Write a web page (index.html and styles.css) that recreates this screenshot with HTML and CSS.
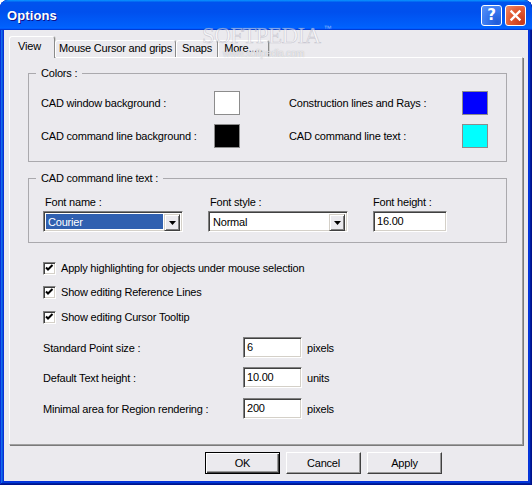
FILE: index.html
```html
<!DOCTYPE html>
<html>
<head>
<meta charset="utf-8">
<title>Options</title>
<link rel="stylesheet" href="styles.css">
</head>
<body>
<div class="window">
  <div class="titlebar">
    <span class="title">Options</span>
    <div class="caption-buttons">
      <div class="cap-btn help">?</div>
      <div class="cap-btn close">
        <svg width="13" height="13" viewBox="0 0 13 13"><path d="M2.5 2.5 L10.5 10.5 M10.5 2.5 L2.5 10.5" stroke="#fff" stroke-width="2.4" stroke-linecap="square"/></svg>
      </div>
    </div>
  </div>
  <div class="client">
    <div class="tabs">
      <div class="tab active tab-view">View</div>
      <div class="tab tab-mouse">Mouse Cursor and grips</div>
      <div class="tab tab-snaps">Snaps</div>
      <div class="tab tab-more">More.....</div>
    </div>
    <div class="panel">
      <fieldset class="group colors">
        <legend>Colors :</legend>
        <div class="color-grid">
          <div class="color-item"><span>CAD window background :</span><span class="swatch sw-white"></span></div>
          <div class="color-item"><span>Construction lines and Rays :</span><span class="swatch sw-blue"></span></div>
          <div class="color-item"><span>CAD command line background :</span><span class="swatch sw-black"></span></div>
          <div class="color-item"><span>CAD command line text :</span><span class="swatch sw-cyan"></span></div>
        </div>
      </fieldset>
      <fieldset class="group font">
        <legend>CAD command line text :</legend>
        <div class="font-row">
          <div class="field combo-field">
            <span class="field-label">Font name :</span>
            <div class="combo sunken">
              <span class="combo-value selected">Courier</span>
              <span class="drop-btn"><svg width="7" height="4" viewBox="0 0 7 4"><path d="M0 0 H7 L3.5 4 Z" fill="#000"/></svg></span>
            </div>
          </div>
          <div class="field combo-field">
            <span class="field-label">Font style :</span>
            <div class="combo sunken">
              <span class="combo-value">Normal</span>
              <span class="drop-btn"><svg width="7" height="4" viewBox="0 0 7 4"><path d="M0 0 H7 L3.5 4 Z" fill="#000"/></svg></span>
            </div>
          </div>
          <div class="field height-field">
            <span class="field-label plain">Font height :</span>
            <div class="textbox sunken">16.00</div>
          </div>
        </div>
      </fieldset>
      <div class="checks">
        <div class="check-row"><span class="checkbox sunken"><svg width="9" height="9" viewBox="0 0 9 9"><path d="M1 3.5 L3 5.5 L7.5 1" fill="none" stroke="#000" stroke-width="2"/></svg></span><span>Apply highlighting for objects under mouse selection</span></div>
        <div class="check-row"><span class="checkbox sunken"><svg width="9" height="9" viewBox="0 0 9 9"><path d="M1 3.5 L3 5.5 L7.5 1" fill="none" stroke="#000" stroke-width="2"/></svg></span><span>Show editing Reference Lines</span></div>
        <div class="check-row"><span class="checkbox sunken"><svg width="9" height="9" viewBox="0 0 9 9"><path d="M1 3.5 L3 5.5 L7.5 1" fill="none" stroke="#000" stroke-width="2"/></svg></span><span>Show editing Cursor Tooltip</span></div>
      </div>
      <div class="numbers">
        <div class="num-row"><span class="num-label">Standard Point size :</span><div class="textbox num sunken">6</div><span class="unit">pixels</span></div>
        <div class="num-row"><span class="num-label">Default Text height :</span><div class="textbox num sunken">10.00</div><span class="unit">units</span></div>
        <div class="num-row"><span class="num-label">Minimal area for Region rendering :</span><div class="textbox num sunken">200</div><span class="unit">pixels</span></div>
      </div>
    </div>
    <div class="buttons">
      <button class="btn default">OK</button>
      <button class="btn">Cancel</button>
      <button class="btn">Apply</button>
    </div>
  </div>
  <div class="watermark">SOFTPEDIA<span class="tm">™</span></div>
  <div class="watermark-url">www.softpedia.com</div>
</div>
</body>
</html>
```
FILE: styles.css
```css
* { box-sizing: border-box; }
html, body { margin: 0; padding: 0; }
body {
  width: 532px;
  height: 485px;
  overflow: hidden;
  background: #ffffff;
  font-family: "Liberation Sans", Arial, sans-serif;
  font-size: 11px;
  letter-spacing: -0.2px;
  color: #000;
}
.window {
  position: relative;
  width: 532px;
  height: 485px;
  display: flex;
  flex-direction: column;
  background: #0831d9;
  border-radius: 8px 8px 0 0;
  box-shadow: inset -1px -1px #00138c, inset 1px 1px #0831d9, inset -2px -2px #001ea0, inset 2px 2px #166aee, inset -3px -3px #003bda, inset 3px 3px #0855dd;
  overflow: hidden;
}
.titlebar {
  height: 30px;
  flex: none;
  display: flex;
  align-items: center;
  justify-content: space-between;
  padding: 1px 6px 0 7px;
  border-radius: 8px 8px 0 0;
  background: linear-gradient(180deg, #0997ff, #0053ee 8%, #0050ee 40%, #0060fc 88%, #0066ff 93%, #005bff 95%, #003dd7 96%, #003dd7);
}
.title {
  color: #fff;
  font-weight: bold;
  font-size: 13px;
  letter-spacing: 0.1px;
  text-shadow: 1px 1px #0f1089;
}
.caption-buttons { display: flex; gap: 3px; }
.cap-btn {
  width: 21px;
  height: 21px;
  border: 1px solid #fff;
  border-radius: 3px;
  display: flex;
  align-items: center;
  justify-content: center;
  color: #fff;
}
.help {
  background: radial-gradient(circle at 80% 85%, #1f5bd9 0%, #3a7af0 55%, #5a93f8 100%);
  font-family: "DejaVu Sans", sans-serif;
  font-weight: bold;
  font-size: 15px;
  line-height: 19px;
  letter-spacing: 0;
}
.close {
  background: radial-gradient(circle at 85% 85%, #c8391a 0%, #e25a32 55%, #ef8c6c 100%);
}
.client {
  flex: 1;
  margin: 0 4px 4px 4px;
  background: #ebeaee;
  padding-top: 6px;
  display: flex;
  flex-direction: column;
}
.tabs {
  display: flex;
  align-items: flex-end;
  height: 21px;
  padding-left: 5px;
  position: relative;
  z-index: 2;
}
.tab {
  height: 17px;
  line-height: 15px;
  text-align: center;
  background: #ebeaee;
  border-top: 1px solid #fff;
  border-left: 1px solid #fff;
  border-right: 1px solid #8a8a8a;
  border-radius: 3px 3px 0 0;
  box-shadow: 1px 0 0 #d0d0d0;
  white-space: nowrap;
}
.tab.active {
  height: 22px;
  line-height: 18px;
  margin-bottom: -1px;
  padding-right: 5px;
}
.tab-view { width: 46px; }
.tab-mouse { width: 121px; }
.tab-snaps { width: 42px; }
.tab-more { width: 51px; }
.panel {
  width: 514px;
  height: 388px;
  margin-left: 5px;
  border-top: 1px solid #fff;
  border-left: 1px solid #fff;
  border-right: 1px solid #a0a0a0;
  border-bottom: 1px solid #a0a0a0;
  box-shadow: 1px 1px 0 #7a7a7a;
  background: #ebeaee;
}
.group {
  margin: 0;
  width: 479px;
  min-width: 0;
  border: 1px solid #aaa9ad;
}
.group legend {
  padding: 0 5px;
  line-height: 13px;
}
.colors {
  margin: 9px 0 0 18px;
  padding: 11px 0 13px 12px;
}
.colors legend { margin-left: -5px; }
.color-grid {
  display: grid;
  grid-template-columns: 199px 199px;
  column-gap: 49px;
  row-gap: 9px;
}
.color-item {
  display: flex;
  align-items: center;
  justify-content: space-between;
  height: 24px;
}
.swatch {
  width: 26px;
  height: 24px;
  border: 1px solid #8c8c8c;
}
.sw-white { background: #ffffff; }
.sw-black { background: #000000; }
.sw-blue { background: #0000ff; }
.sw-cyan { background: #00ffff; }
.font {
  margin: 10px 0 0 18px;
  padding: 11px 0 10px 14px;
}
.font legend { margin-left: -7px; }
.font-row { display: flex; gap: 25px; }
.field { display: flex; flex-direction: column; gap: 2px; }
.field-label { line-height: 13px; padding-left: 2px; }
.field-label.plain { padding-left: 0; }
.combo-field { width: 140px; }
.height-field { width: 74px; }
.sunken {
  background: #fff;
  border: 1px solid;
  border-color: #808080 #ffffff #ffffff #808080;
  box-shadow: inset 1px 1px 0 #404040, inset -1px -1px 0 #d4d0c8;
}
.combo {
  height: 21px;
  padding: 2px;
  display: flex;
}
.combo-value {
  flex: 1;
  line-height: 17px;
  padding-left: 2px;
  margin-right: 1px;
}
.combo-value.selected { background: #3060b0; color: #fff; }
.drop-btn {
  width: 16px;
  height: 17px;
  display: flex;
  align-items: center;
  justify-content: center;
  background: #ebeaee;
  border: 1px solid;
  border-color: #d4d0c8 #404040 #404040 #d4d0c8;
  box-shadow: inset 1px 1px 0 #fff, inset -1px -1px 0 #808080;
}
.textbox {
  height: 21px;
  padding: 1px 3px;
  line-height: 17px;
}
.checks {
  margin: 19px 0 0 33px;
  display: flex;
  flex-direction: column;
}
.check-row {
  display: flex;
  align-items: center;
  gap: 5px;
  height: 13px;
  line-height: 13px;
}
.check-row + .check-row { margin-top: 11px; }
.check-row:last-child { margin-top: 12px; }
.checkbox {
  width: 13px;
  height: 13px;
  flex: none;
  display: flex;
  align-items: center;
  justify-content: center;
}
.numbers {
  margin: 13px 0 0 33px;
  display: flex;
  flex-direction: column;
}
.num-row {
  display: flex;
  align-items: center;
  height: 21px;
}
.num-row + .num-row { margin-top: 9px; }
.num-row:last-child { margin-top: 10px; }
.num-label { width: 200px; }
.textbox.num { width: 59px; }
.unit { margin-left: 5px; }
.buttons {
  display: flex;
  gap: 6px;
  margin-top: 7px;
  padding-left: 201px;
}
.btn {
  width: 75px;
  height: 22px;
  padding: 0;
  font: inherit;
  letter-spacing: -0.2px;
  color: #000;
  background: #ebeaee;
  border: 1px solid;
  border-color: #fff #404040 #404040 #fff;
  box-shadow: inset -1px -1px 0 #9a9a9a;
}
.btn.default {
  border: 1px solid #000;
  box-shadow: inset 1px 1px 0 #fff, inset -1px -1px 0 #404040, inset -2px -2px 0 #9a9a9a;
}
.watermark {
  position: absolute;
  left: 202px;
  top: 20px;
  font-family: "Liberation Serif", serif;
  font-size: 23px;
  line-height: 18px;
  letter-spacing: -0.6px;
  color: rgba(255, 255, 255, 0.5);
  -webkit-text-stroke: 0.6px rgba(140, 140, 160, 0.4);
  pointer-events: none;
  z-index: 5;
}
.watermark .tm {
  font-family: "Liberation Sans", sans-serif;
  font-size: 8px;
  vertical-align: 12px;
  margin-left: 3px;
  -webkit-text-stroke: 0;
}
.watermark-url {
  position: absolute;
  left: 223px;
  top: 49px;
  font-size: 10px;
  line-height: 9px;
  letter-spacing: -0.3px;
  color: rgba(255, 255, 255, 0.7);
  text-shadow: 0 0 1px rgba(120, 120, 130, 0.6);
  pointer-events: none;
  z-index: 5;
}
```
